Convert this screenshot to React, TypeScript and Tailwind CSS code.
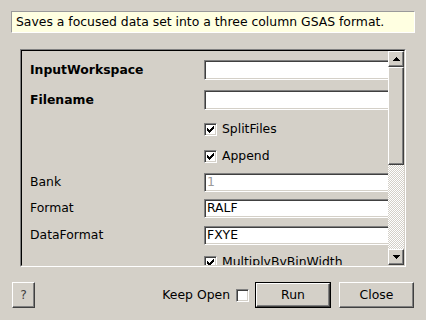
import React from "react";

const raised =
  "border border-t-white border-l-white border-b-[#404040] border-r-[#404040] shadow-[inset_-1px_-1px_0_#808080]";
const sunken =
  "border border-t-[#808080] border-l-[#808080] border-b-white border-r-white shadow-[inset_1px_1px_0_#404040,inset_-1px_-1px_0_#d4d0c8]";

const CHECK = [
  "......X",
  ".....XX",
  "X...XXX",
  "XX.XXX.",
  "XXXXX..",
  ".XXX...",
  "..X....",
];

function CheckBox({ checked }: { checked?: boolean }) {
  return (
    <span className={`w-[13px] h-[13px] bg-white ${sunken} flex items-center justify-center shrink-0`}>
      {checked && (
        <svg width="7" height="7" viewBox="0 0 7 7" shapeRendering="crispEdges">
          {CHECK.flatMap((row, y) =>
            row.split("").map((c, x) =>
              c === "X" ? <rect key={`${x}-${y}`} x={x} y={y} width="1" height="1" fill="#000" /> : null
            )
          )}
        </svg>
      )}
    </span>
  );
}

function TextBox({ value, grey, tall }: { value?: string; grey?: boolean; tall?: boolean }) {
  return (
    <div
      className={`w-[210px] ${tall ? "h-[20px]" : "h-[19px]"} bg-white ${sunken} pl-[2px] flex items-center shrink-0 ${
        grey ? "text-[#9a9a9a]" : "text-black"
      }`}
    >
      {value}
    </div>
  );
}

function Arrow({ down }: { down?: boolean }) {
  return (
    <svg width="7" height="4" viewBox="0 0 7 4" shapeRendering="crispEdges">
      <path d={down ? "M0 0h7l-3.5 4z" : "M3.5 0L7 4H0z"} fill="#000" />
    </svg>
  );
}

function Row({ h, children }: { h: string; children: React.ReactNode }) {
  return <div className={`${h} shrink-0 flex items-center whitespace-nowrap`}>{children}</div>;
}

export default function App() {
  return (
    <div className="w-[426px] h-[320px] bg-[#d4d0c8] font-['DejaVu_Sans',sans-serif] text-[12.4px] text-black flex flex-col px-[11px] pt-[11px] overflow-hidden">
      <div className="h-[22px] shrink-0 bg-[#ffffe1] border border-t-[#9a9a9a] border-l-[#9a9a9a] border-b-white border-r-white pl-[4px] flex items-center whitespace-nowrap">
        Saves a focused data set into a three column GSAS format.
      </div>

      <div className="mt-[16px] mx-[9px] h-[218px] shrink-0 border border-t-[#808080] border-l-[#808080] border-b-white border-r-white">
        <div className="h-full border border-t-black border-l-black border-b-[#d4d0c8] border-r-[#d4d0c8] flex">
          <div className="flex-1 overflow-hidden pl-[8px] pt-[4px] flex flex-col">
            <Row h="h-[30px]">
              <span className="w-[174px] shrink-0 font-bold">InputWorkspace</span>
              <TextBox tall />
            </Row>
            <Row h="h-[30px]">
              <span className="w-[174px] shrink-0 font-bold">Filename</span>
              <TextBox tall />
            </Row>
            <Row h="h-[28px]">
              <span className="w-[174px] shrink-0" />
              <CheckBox checked />
              <span className="ml-[5px]">SplitFiles</span>
            </Row>
            <Row h="h-[26px]">
              <span className="w-[174px] shrink-0" />
              <CheckBox checked />
              <span className="ml-[5px]">Append</span>
            </Row>
            <Row h="h-[26px]">
              <span className="w-[174px] shrink-0">Bank</span>
              <TextBox value="1" grey />
            </Row>
            <Row h="h-[27px]">
              <span className="w-[174px] shrink-0">Format</span>
              <TextBox value="RALF" />
            </Row>
            <Row h="h-[27px]">
              <span className="w-[174px] shrink-0">DataFormat</span>
              <TextBox value="FXYE" />
            </Row>
            <Row h="h-[26px]">
              <span className="w-[174px] shrink-0" />
              <CheckBox checked />
              <span className="ml-[5px]">MultiplyByBinWidth</span>
            </Row>
          </div>

          <div className="w-[16px] shrink-0 flex flex-col">
            <div className={`h-[16px] shrink-0 bg-[#d4d0c8] ${raised} flex items-center justify-center`}>
              <Arrow />
            </div>
            <div className={`h-[98px] shrink-0 bg-[#d4d0c8] ${raised}`} />
            <div className="flex-1 bg-[image:repeating-conic-gradient(#ffffff_0_25%,#d4d0c8_0_50%)] bg-[length:2px_2px]" />
            <div className={`h-[16px] shrink-0 bg-[#d4d0c8] ${raised} flex items-center justify-center`}>
              <Arrow down />
            </div>
          </div>
        </div>
      </div>

      <div className="mt-[15px] h-[26px] shrink-0 flex items-center">
        <button className={`ml-[1px] w-[23px] h-[26px] ${raised} text-[#404040] flex items-center justify-center`}>
          ?
        </button>
        <span className="ml-auto">Keep Open</span>
        <span className="ml-[6px]">
          <CheckBox />
        </span>
        <div className="ml-[6px] w-[76px] h-[26px] border border-black">
          <div className={`h-full ${raised} flex items-center justify-center`}>Run</div>
        </div>
        <button className={`ml-[8px] mr-[1px] w-[75px] h-[26px] ${raised} flex items-center justify-center`}>
          Close
        </button>
      </div>
    </div>
  );
}
